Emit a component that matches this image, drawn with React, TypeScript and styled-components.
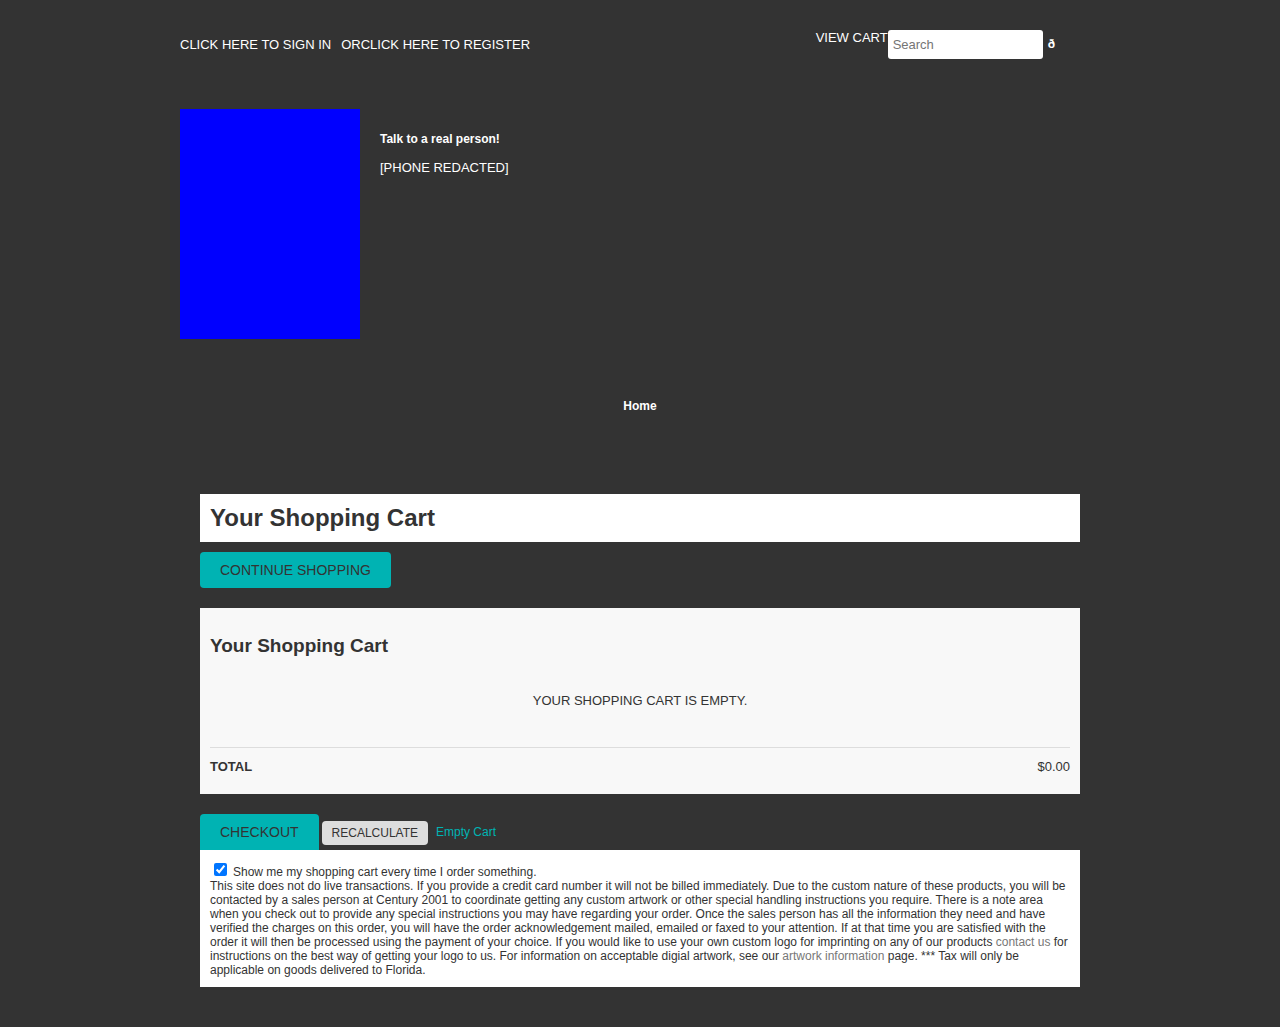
import React from 'react';
import styled, { createGlobalStyle } from 'styled-components';

const GlobalStyle = createGlobalStyle`
  body {
    margin: 0;
    background-color: #333333;
    font-family: "Liberation Sans", Arial, sans-serif;
    color: #333;
  }
`;

const Page = styled.div`
  width: 920px;
  margin: 0 auto;
  padding-top: 30px;
`;

const TopBar = styled.div`
  display: flex;
  justify-content: space-between;
  align-items: flex-start;
  height: 29px;
  padding-right: 45px;
`;

const AccountLinks = styled.div`
  display: flex;
  gap: 10px;
  padding-top: 7px;
`;

const TopLink = styled.a`
  color: #fff;
  font-size: 13px;
  text-decoration: none;
  text-transform: uppercase;
`;

const CartSearch = styled.div`
  display: flex;
  align-items: flex-start;
`;

const CartLink = styled(TopLink)`
  line-height: 15px;
`;

const SearchInput = styled.input`
  width: 155px;
  height: 29px;
  box-sizing: border-box;
  border: none;
  border-radius: 3px;
  padding: 0 5px;
  font-family: "Liberation Sans", Arial, sans-serif;
  font-size: 13px;
  color: #333;
  &::placeholder {
    color: #757575;
  }
`;

const SearchGlyph = styled.span`
  color: #fff;
  font-size: 12px;
  font-weight: bold;
  margin-left: 5px;
  padding-top: 7px;
`;

const Banner = styled.div`
  display: flex;
  gap: 20px;
  margin-top: 50px;
`;

const Logo = styled.div`
  width: 180px;
  height: 230px;
  background: #0000ff;
`;

const Contact = styled.div`
  padding-top: 23px;
  color: #fff;
  font-size: 12px;
  p {
    margin: 0 0 13px;
    line-height: 15px;
  }
`;

const ContactLead = styled.p`
  font-weight: bold;
`;

const ContactPhone = styled.p`
  font-size: 13px;
`;

const Nav = styled.nav`
  display: flex;
  justify-content: center;
  margin-top: 60px;
  height: 16px;
`;

const NavLink = styled.a`
  color: #fff;
  font-size: 12px;
  font-weight: bold;
  text-decoration: none;
`;

const CartArea = styled.div`
  margin: 79px 20px 40px;
`;

const TitleBar = styled.div`
  background: #fff;
  height: 48px;
  display: flex;
  align-items: center;
  padding: 0 10px;
`;

const Title = styled.h1`
  margin: 0;
  font-size: 24px;
  font-weight: bold;
  color: #333;
`;

const TealButton = styled.button<{ $attached?: boolean }>`
  background: #00b3b3;
  border: none;
  border-radius: ${({ $attached }) => ($attached ? '4px 4px 0 0' : '4px')};
  color: #333;
  font-family: "Liberation Sans", Arial, sans-serif;
  font-size: 14px;
  text-transform: uppercase;
  height: 36px;
  padding: 0 20px;
  cursor: pointer;
`;

const ContinueRow = styled.div`
  margin-top: 10px;
`;

const CartBox = styled.div`
  background: #f8f8f8;
  margin-top: 20px;
  padding: 27px 10px 20px;
`;

const BoxTitle = styled.h2`
  margin: 0;
  font-size: 19px;
  font-weight: bold;
  color: #333;
`;

const EmptyMsg = styled.p`
  margin: 36px 0 39px;
  text-align: center;
  font-size: 13px;
  text-transform: uppercase;
  color: #333;
`;

const TotalRow = styled.div`
  display: flex;
  justify-content: space-between;
  border-top: 1px solid #ddd;
  padding-top: 11px;
  font-size: 13px;
  color: #333;
`;

const TotalLabel = styled.span`
  font-weight: bold;
`;

const Actions = styled.div`
  display: flex;
  align-items: center;
  gap: 3px;
  margin-top: 20px;
`;

const GreyButton = styled.button`
  background: #ddd;
  border: none;
  border-radius: 4px;
  height: 24px;
  padding: 0 10px;
  margin-top: 1px;
  font-family: "Liberation Sans", Arial, sans-serif;
  font-size: 12px;
  color: #333;
  text-transform: uppercase;
`;

const EmptyLink = styled.a`
  color: #00b3b3;
  font-size: 12px;
  text-decoration: none;
  margin: 0 0 0 5px;
`;

const NotesBox = styled.div`
  background: #fff;
  padding: 10px 10px 10px;
  font-size: 12px;
  line-height: 14px;
  color: #333;
`;

const CheckRow = styled.label`
  display: flex;
  align-items: flex-end;
  input {
    margin: 3px 6px 3px 4px;
    width: 13px;
    height: 13px;
  }
`;

const GreyLink = styled.a`
  color: #777;
  text-decoration: none;
`;

export default function App() {
  return (
    <>
      <GlobalStyle />
      <Page>
        <TopBar>
          <AccountLinks>
            <TopLink href="#">Click here to sign in</TopLink>
            <TopLink href="#">orClick here to register</TopLink>
          </AccountLinks>
          <CartSearch>
            <CartLink href="#">View Cart</CartLink>
            <SearchInput placeholder="Search" />
            <SearchGlyph>ð</SearchGlyph>
          </CartSearch>
        </TopBar>
        <Banner>
          <Logo />
          <Contact>
            <ContactLead>Talk to a real person!</ContactLead>
            <ContactPhone>[PHONE REDACTED]</ContactPhone>
          </Contact>
        </Banner>
        <Nav>
          <NavLink href="#">Home</NavLink>
        </Nav>
        <CartArea>
          <TitleBar>
            <Title>Your Shopping Cart</Title>
          </TitleBar>
          <ContinueRow>
            <TealButton>Continue Shopping</TealButton>
          </ContinueRow>
          <CartBox>
            <BoxTitle>Your Shopping Cart</BoxTitle>
            <EmptyMsg>Your shopping cart is empty.</EmptyMsg>
            <TotalRow>
              <TotalLabel>TOTAL</TotalLabel>
              <span>$0.00</span>
            </TotalRow>
          </CartBox>
          <Actions>
            <TealButton $attached>Checkout</TealButton>
            <GreyButton>Recalculate</GreyButton>
            <EmptyLink href="#">Empty Cart</EmptyLink>
          </Actions>
          <NotesBox>
            <CheckRow>
              <input type="checkbox" defaultChecked />
              Show me my shopping cart every time I order something.
            </CheckRow>
            This site does not do live transactions. If you provide a credit card number it will not be billed
            immediately. Due to the custom nature of these products, you will be contacted by a sales person at
            Century 2001 to coordinate getting any custom artwork or other special handling instructions you
            require. There is a note area when you check out to provide any special instructions you may have
            regarding your order. Once the sales person has all the information they need and have verified the
            charges on this order, you will have the order acknowledgement mailed, emailed or faxed to your
            attention. If at that time you are satisfied with the order it will then be processed using the
            payment of your choice. If you would like to use your own custom logo for imprinting on any of our
            products <GreyLink href="#">contact us</GreyLink> for instructions on the best way of getting your
            logo to us. For information on acceptable digial artwork, see our{' '}
            <GreyLink href="#">artwork information</GreyLink> page. *** Tax will only be applicable on goods
            delivered to Florida.
          </NotesBox>
        </CartArea>
      </Page>
    </>
  );
}
